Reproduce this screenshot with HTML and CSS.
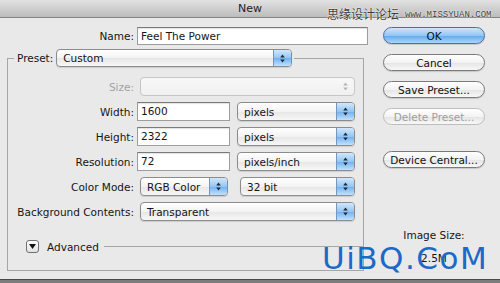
FILE: index.html
```html
<!DOCTYPE html>
<html lang="en">
  <head>
    <meta charset="UTF-8" />
    <meta name="viewport" content="width=device-width, initial-scale=1.0" />
    <title>New</title>
    <link rel="stylesheet" href="styles.css">
  </head>
  <body>
    <div class="window">
      <div class="titlebar">New</div>
      <div class="mark-top">
        <span class="mark-cn">思缘设计论坛</span>
        <span class="mark-url">www.MISSYUAN.COM</span>
      </div>

      <div class="dialog">
        <div class="form">
          <div class="name-row">
            <label class="label">Name:</label>
            <div class="field name-field">Feel The Power</div>
          </div>

          <fieldset class="preset">
            <legend class="preset-legend">
              <span class="label">Preset:</span>
              <div class="popup preset-popup">
                <span class="value">Custom</span>
                <span class="stepper"><svg width="5" height="9" viewBox="0 0 5 9"><path d="M2.5 0.5 L4.8 3.5 L0.2 3.5 Z M2.5 8.5 L4.8 5.5 L0.2 5.5 Z" fill="#1d2b3c"/></svg></span>
              </div>
            </legend>

            <div class="grid">
              <label class="label disabled">Size:</label>
              <div class="cell">
                <div class="popup off wide">
                  <span class="value"></span>
                  <span class="stepper"><svg width="5" height="9" viewBox="0 0 5 9"><path d="M2.5 0.5 L4.8 3.5 L0.2 3.5 Z M2.5 8.5 L4.8 5.5 L0.2 5.5 Z" fill="#b5b5b5"/></svg></span>
                </div>
              </div>

              <label class="label">Width:</label>
              <div class="cell">
                <div class="field num">1600</div>
                <div class="popup unit">
                  <span class="value">pixels</span>
                  <span class="stepper"><svg width="5" height="9" viewBox="0 0 5 9"><path d="M2.5 0.5 L4.8 3.5 L0.2 3.5 Z M2.5 8.5 L4.8 5.5 L0.2 5.5 Z" fill="#1d2b3c"/></svg></span>
                </div>
              </div>

              <label class="label">Height:</label>
              <div class="cell">
                <div class="field num">2322</div>
                <div class="popup unit">
                  <span class="value">pixels</span>
                  <span class="stepper"><svg width="5" height="9" viewBox="0 0 5 9"><path d="M2.5 0.5 L4.8 3.5 L0.2 3.5 Z M2.5 8.5 L4.8 5.5 L0.2 5.5 Z" fill="#1d2b3c"/></svg></span>
                </div>
              </div>

              <label class="label">Resolution:</label>
              <div class="cell">
                <div class="field num">72</div>
                <div class="popup unit">
                  <span class="value">pixels/inch</span>
                  <span class="stepper"><svg width="5" height="9" viewBox="0 0 5 9"><path d="M2.5 0.5 L4.8 3.5 L0.2 3.5 Z M2.5 8.5 L4.8 5.5 L0.2 5.5 Z" fill="#1d2b3c"/></svg></span>
                </div>
              </div>

              <label class="label">Color Mode:</label>
              <div class="cell">
                <div class="popup mode">
                  <span class="value">RGB Color</span>
                  <span class="stepper"><svg width="5" height="9" viewBox="0 0 5 9"><path d="M2.5 0.5 L4.8 3.5 L0.2 3.5 Z M2.5 8.5 L4.8 5.5 L0.2 5.5 Z" fill="#1d2b3c"/></svg></span>
                </div>
                <div class="popup bits">
                  <span class="value">32 bit</span>
                  <span class="stepper"><svg width="5" height="9" viewBox="0 0 5 9"><path d="M2.5 0.5 L4.8 3.5 L0.2 3.5 Z M2.5 8.5 L4.8 5.5 L0.2 5.5 Z" fill="#1d2b3c"/></svg></span>
                </div>
              </div>

              <label class="label">Background Contents:</label>
              <div class="cell">
                <div class="popup wide">
                  <span class="value">Transparent</span>
                  <span class="stepper"><svg width="5" height="9" viewBox="0 0 5 9"><path d="M2.5 0.5 L4.8 3.5 L0.2 3.5 Z M2.5 8.5 L4.8 5.5 L0.2 5.5 Z" fill="#1d2b3c"/></svg></span>
                </div>
              </div>
            </div>

            <div class="advanced">
              <span class="disclosure"><svg width="7" height="5" viewBox="0 0 7 5"><path d="M0 0 L7 0 L3.5 5 Z" fill="#111"/></svg></span>
              <span class="adv-text">Advanced</span>
              <span class="adv-line"></span>
            </div>
          </fieldset>
        </div>

        <div class="side">
          <button class="btn default">OK</button>
          <button class="btn">Cancel</button>
          <button class="btn">Save Preset...</button>
          <button class="btn off">Delete Preset...</button>
          <button class="btn device">Device Central...</button>
          <div class="image-size">
            <span>Image Size:</span>
            <span class="size-value">2.5M</span>
          </div>
        </div>
      </div>

      <div class="bottom-edge"></div>
      <div class="mark-big">UiBQ.CoM</div>
    </div>
  </body>
</html>
```

FILE: styles.css
```css
body {
  margin: 0;
  font-family: "Lucida Grande", "DejaVu Sans", sans-serif;
  font-size: 10.5px;
  color: #151515;
}
.window {
  position: relative;
  width: 500px;
  height: 283px;
  overflow: hidden;
  background: #e9e9e9;
}
.titlebar {
  height: 17px;
  line-height: 18px;
  text-align: center;
  font-size: 11px;
  color: #222;
  background: linear-gradient(#e2e2e2, #bcbcbc);
  border-bottom: 1px solid #858585;
}
.mark-top {
  position: absolute;
  left: 327px;
  top: 7px;
  display: flex;
  align-items: center;
  gap: 6px;
  color: #3b3b3b;
  text-shadow: 0 0 2px #fff, 0 0 1px #fff;
}
.mark-cn {
  font-family: "Noto Sans CJK SC", sans-serif;
  font-size: 12px;
  line-height: 14px;
}
.mark-url {
  font-family: "Liberation Mono", monospace;
  font-size: 9px;
  margin-top: 2px;
}
.dialog {
  display: flex;
  height: 261px;
  box-sizing: border-box;
  padding: 9px 0 0 7px;
}
.form {
  width: 357px;
}
.label {
  text-align: right;
  white-space: nowrap;
}
.disabled {
  color: #a2a2a2;
}
.name-row {
  display: grid;
  grid-template-columns: 127px 231px;
  gap: 3px;
  align-items: center;
  height: 18px;
}
.field {
  box-sizing: border-box;
  height: 19px;
  line-height: 17px;
  padding-left: 3px;
  background: #fff;
  border: 1px solid #9d9d9d;
  border-top-color: #7a7a7a;
  box-shadow: inset 0 1px 1px rgba(0, 0, 0, 0.12);
}
.name-field {
  height: 18px;
  line-height: 16px;
}
.preset {
  margin: 4px 0 0 0;
  padding: 0 0 17px 0;
  min-width: 0;
  border: 1px solid #a6a6a6;
}
.preset-legend {
  display: flex;
  align-items: center;
  gap: 3px;
  margin-left: 6px;
  padding: 0 2px 0 3px;
}
.popup {
  display: flex;
  align-items: center;
  box-sizing: border-box;
  height: 19px;
  padding-left: 6px;
  border: 1px solid #8c8c8c;
  border-radius: 4px;
  background: linear-gradient(#ffffff, #f3f3f3 50%, #e6e6e6 51%, #f7f7f7);
  box-shadow: 0 1px 1px rgba(0, 0, 0, 0.12);
  overflow: hidden;
}
.popup .value {
  flex: 1;
  white-space: nowrap;
}
.stepper {
  display: flex;
  align-items: center;
  justify-content: center;
  width: 17px;
  align-self: stretch;
  border-left: 1px solid #7896bd;
  background: linear-gradient(#d3e7fb, #93c6f4 50%, #6fb0ee 51%, #c2e1fd);
}
.popup.off {
  border-color: #c6c6c6;
  background: linear-gradient(#f8f8f8, #f0f0f0);
  box-shadow: none;
}
.popup.off .stepper {
  border-left: none;
  background: none;
}
.preset-popup {
  width: 236px;
  height: 18px;
}
.grid {
  display: grid;
  grid-template-columns: 126px 1fr;
  grid-auto-rows: 19px;
  column-gap: 3px;
  row-gap: 6px;
  align-items: center;
  padding: 10px 8px 0 0;
}
.cell {
  display: flex;
  align-items: center;
  gap: 7px;
}
.num {
  width: 93px;
}
.unit {
  width: 118px;
}
.wide {
  width: 215px;
  margin-left: 3px;
}
.mode {
  width: 88px;
  margin-left: 3px;
  margin-right: 5px;
}
.bits {
  width: 115px;
}
.advanced {
  display: flex;
  align-items: center;
  height: 13px;
  margin-top: 19px;
  padding-left: 18px;
}
.disclosure {
  display: flex;
  align-items: center;
  justify-content: center;
  box-sizing: border-box;
  width: 13px;
  height: 13px;
  border: 1px solid #707070;
  border-radius: 3px;
  background: linear-gradient(#ffffff, #e1e1e1);
}
.adv-text {
  margin-left: 8px;
}
.adv-line {
  flex: 1;
  height: 1px;
  margin-left: 5px;
  background: #a6a6a6;
}
.side {
  display: flex;
  flex-direction: column;
  width: 102px;
  margin-left: 19px;
  gap: 10px;
}
.btn {
  height: 17px;
  padding: 0;
  font: inherit;
  color: #111;
  border: 1px solid #7a7a7a;
  border-radius: 9px;
  background: linear-gradient(#ffffff, #f3f3f3 50%, #e4e4e4 51%, #f8f8f8);
  box-shadow: 0 1px 1px rgba(0, 0, 0, 0.15);
}
.btn.default {
  border-color: #4c6f9d;
  background: linear-gradient(#cfe6fb, #92c6f4 50%, #62a8ec 51%, #acd6fb);
}
.btn.off {
  color: #9d9d9d;
  border-color: #bdbdbd;
  box-shadow: none;
}
.btn.device {
  margin-top: 16px;
}
.image-size {
  display: flex;
  flex-direction: column;
  align-items: center;
  gap: 10px;
  margin-top: 51px;
  line-height: 13px;
}
.bottom-edge {
  height: 3px;
  border-top: 1px solid #4a4a4a;
  background: #7c7c7c;
}
.mark-big {
  position: absolute;
  left: 322px;
  top: 243px;
  font-family: "DejaVu Sans", sans-serif;
  font-size: 31px;
  line-height: 1;
  letter-spacing: 1.5px;
  color: #1b6ac9;
}
```
